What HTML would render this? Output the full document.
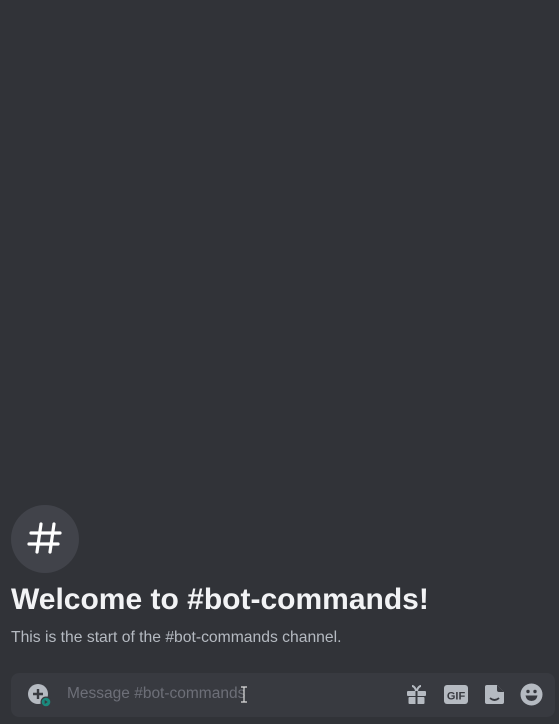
<!DOCTYPE html><html><head><style>
body{margin:0;width:559px;height:724px;background:#313338;font-family:"Liberation Sans",sans-serif;position:relative;overflow:hidden}
.c{position:absolute;left:11px;top:505px;width:68px;height:68px;border-radius:50%;background:#41434a}
h1{position:absolute;left:11px;top:583px;margin:0;font-size:30px;font-weight:bold;color:#f2f3f5}
p{position:absolute;left:11px;top:629px;margin:0;font-size:15.7px;color:#b5bac1}
.in{position:absolute;left:11px;top:673px;width:544px;height:44px;border-radius:8px;background:#383a40}
.ph{position:absolute;left:67px;top:685px;font-size:15.5px;color:#6d6f78}
svg{position:absolute}
</style></head><body>
<div class="c"></div>
<svg style="left:25px;top:519px" width="40" height="40" viewBox="0 0 40 40"><g stroke="#fff" stroke-width="3.2" stroke-linecap="round"><line x1="16" y1="5" x2="12" y2="33"/><line x1="29" y1="5" x2="25" y2="33"/><line x1="6" y1="14" x2="35" y2="14"/><line x1="4" y1="25" x2="33" y2="25"/></g></svg>
<h1>Welcome to #bot-commands!</h1>
<p>This is the start of the #bot-commands channel.</p>
<div class="in"></div>
<div class="ph">Message #bot-commands</div>
<svg style="left:240px;top:686px" width="8" height="17"><path d="M1 1h6M4 1v15M1 16h6" stroke="#ddd" stroke-width="1.2" fill="none"/></svg>
<svg style="left:28px;top:684px" width="24" height="24"><circle cx="10" cy="10" r="10" fill="#b5bac1"/><path d="M10 5v10M5 10h10" stroke="#383a40" stroke-width="2.4"/><circle cx="18" cy="18" r="5.5" fill="#383a40"/><circle cx="18" cy="18" r="4.3" fill="#1a8a7d"/><path d="M16.7 16v4l3-2z" fill="#383a40"/></svg>
<svg style="left:406px;top:684px" width="21" height="21"><path d="M6 2c2 0 4 3 4 5M15 2c-2 0-4 3-4 5" stroke="#b5bac1" stroke-width="2" fill="none"/><rect x="1" y="7" width="19" height="5" rx="1" fill="#b5bac1"/><rect x="2.5" y="13" width="16" height="7" rx="1" fill="#b5bac1"/><rect x="9.5" y="7" width="2" height="13" fill="#383a40"/></svg>
<svg style="left:444px;top:685px" width="24" height="19"><rect width="24" height="19" rx="3" fill="#b5bac1"/><text x="12" y="14.5" font-family="Liberation Sans" font-weight="bold" font-size="11" fill="#383a40" text-anchor="middle">GIF</text></svg>
<svg style="left:484px;top:684px" width="21" height="21"><path d="M3 1h10l7 7v10a2 2 0 0 1-2 2H3a2 2 0 0 1-2-2V3a2 2 0 0 1 2-2z" fill="#b5bac1"/><path d="M13 1v5a2 2 0 0 0 2 2h5" fill="#383a40"/><path d="M6 14q4.5 4 9 0" stroke="#383a40" stroke-width="1.8" fill="none"/></svg>
<svg style="left:520px;top:683px" width="23" height="23"><circle cx="11.5" cy="11.5" r="11" fill="#b5bac1"/><circle cx="8" cy="8.5" r="1.7" fill="#383a40"/><circle cx="15" cy="8.5" r="1.7" fill="#383a40"/><path d="M5.5 12.5h12q-1 5.5-6 5.5t-6-5.5z" fill="#383a40"/></svg>
</body></html>
